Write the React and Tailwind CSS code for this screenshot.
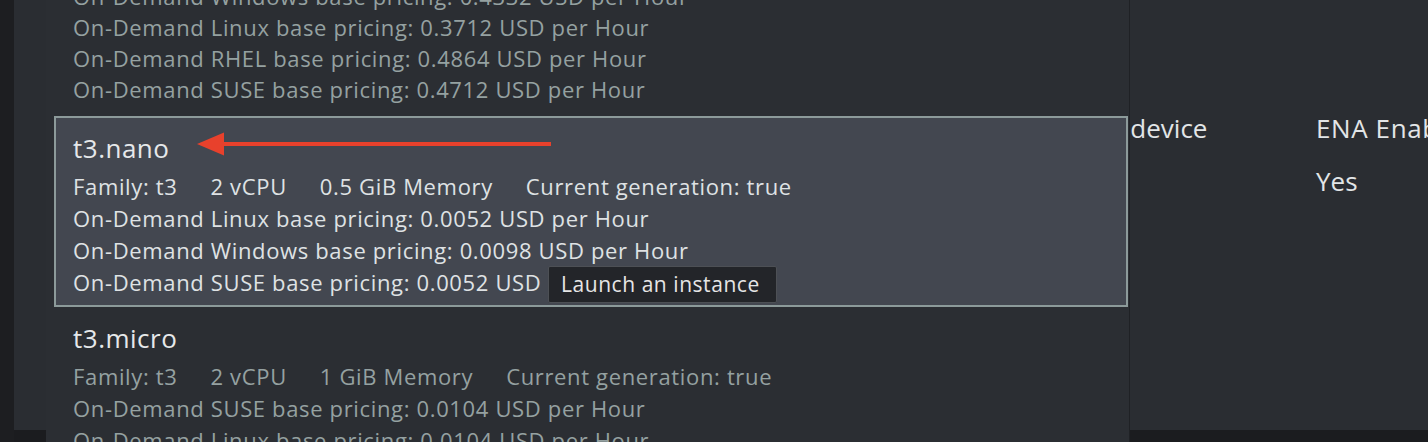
import React from "react";

const font = { fontFamily: '"Open Sans", "Noto Sans", sans-serif' };

const items = [
  {
    name: "t3.nano",
    family: "t3",
    vcpu: "2 vCPU",
    memory: "0.5 GiB Memory",
    prices: [
      "On-Demand Linux base pricing: 0.0052 USD per Hour",
      "On-Demand Windows base pricing: 0.0098 USD per Hour",
      "On-Demand SUSE base pricing: 0.0052 USD per Hour",
    ],
    active: true,
  },
  {
    name: "t3.micro",
    family: "t3",
    vcpu: "2 vCPU",
    memory: "1 GiB Memory",
    prices: [
      "On-Demand SUSE base pricing: 0.0104 USD per Hour",
      "On-Demand Linux base pricing: 0.0104 USD per Hour",
    ],
  },
];

function Arrow() {
  return (
    <svg width="356" height="26" viewBox="0 0 356 26" className="absolute left-[141px] top-[13px]">
      <path d="M0 13 L27 1.5 L27 24.5 Z" fill="#e8412c" />
      <rect x="24" y="11" width="330" height="4" fill="#e8412c" />
    </svg>
  );
}

function Item({ item }) {
  const muted = item.active ? "text-[#dfe2e4]" : "text-[#95a1a1]";
  return (
    <div
      className={
        "relative border-2 pl-[17px] pr-4 " +
        (item.active
          ? "bg-[#434750] border-[#8c9a9a] pt-[12px] pb-[7px]"
          : "border-transparent pt-[11px] pb-[7px]")
      }
    >
      <div className="text-[26px] leading-[36px] tracking-[0.5px] text-[#e6e8ea]">{item.name}</div>
      {item.active && <Arrow />}
      <div className={"mt-[4px] text-[22px] leading-[32px] tracking-[0.65px] " + muted}>
        <div className="flex gap-[33px] whitespace-nowrap">
          <span>Family: {item.family}</span>
          <span>{item.vcpu}</span>
          <span>{item.memory}</span>
          <span>Current generation: true</span>
        </div>
        {item.prices.map((p) => (
          <div key={p} className="whitespace-nowrap">
            {p}
          </div>
        ))}
      </div>
    </div>
  );
}

export default function App() {
  return (
    <div className="relative w-[1428px] h-[442px] bg-[#1b1c1f] overflow-hidden flex" style={font}>
      <div className="w-[14px] shrink-0 bg-[#1d1e21]" />
      <div className="relative flex-1 min-w-0 h-[430px] bg-[#2a2d32]">
        {/* table header behind the dropdown */}
        <div className="flex pt-[109px] text-[26px] leading-[38px] text-[#e2e5e7]">
          <div className="ml-[1053px] w-[249px] shrink-0 whitespace-nowrap">Root device</div>
          <div className="flex flex-col gap-[15px] shrink-0">
            <span className="whitespace-nowrap tracking-[0.6px]">ENA Enabled</span>
            <span>Yes</span>
          </div>
        </div>

        {/* instance type dropdown */}
        <div className="absolute left-[32px] top-0 w-[1084px] h-[460px] bg-[#2b2e33] border-r border-[#1f2125] pl-[8px] pr-[1px] overflow-hidden">
          <div className="-mt-[19px] pl-[19px] pb-[11px] text-[22px] leading-[31px] tracking-[0.65px] text-[#95a1a1] whitespace-nowrap">
            <div>On-Demand Windows base pricing: 0.4332 USD per Hour</div>
            <div>On-Demand Linux base pricing: 0.3712 USD per Hour</div>
            <div>On-Demand RHEL base pricing: 0.4864 USD per Hour</div>
            <div>On-Demand SUSE base pricing: 0.4712 USD per Hour</div>
          </div>
          {items.map((it) => (
            <Item key={it.name} item={it} />
          ))}
        </div>

        {/* tooltip */}
        <div className="absolute left-[534px] top-[266px] h-[37px] pl-[12px] pr-[16px] flex items-center bg-[#232529] border border-[#4d5055] rounded-[2px] text-[21px] tracking-[0.55px] text-[#e6e6e6] whitespace-nowrap">
          Launch an instance
        </div>
      </div>
    </div>
  );
}
